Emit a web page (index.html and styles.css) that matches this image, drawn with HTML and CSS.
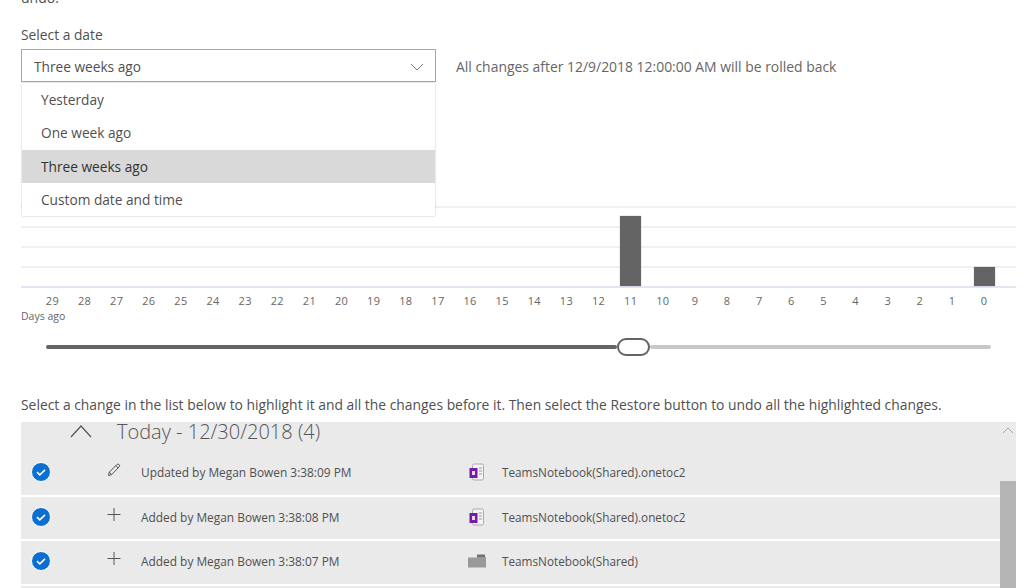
FILE: index.html
```html
<!DOCTYPE html>
<html lang="en">
<head>
<meta charset="utf-8">
<title>Restore</title>
<link rel="stylesheet" href="styles.css">
</head>
<body>
<main class="page">
  <p class="cut">undo.</p>
  <label class="field-label">Select a date</label>
  <div class="select-row">
    <div class="select-wrap">
      <div class="select-box">
        <span>Three weeks ago</span>
        <svg class="caret" width="14" height="8" viewBox="0 0 14 8"><path d="M1 1l6 6 6-6" fill="none" stroke="#777" stroke-width="1"/></svg>
      </div>
      <ul class="menu">
        <li>Yesterday</li>
        <li>One week ago</li>
        <li class="selected">Three weeks ago</li>
        <li>Custom date and time</li>
      </ul>
    </div>
    <span class="hint">All changes after 12/9/2018 12:00:00 AM will be rolled back</span>
  </div>

  <section class="chart">
    <div class="plot">
      <i></i><i></i><i></i><i></i><i></i><i></i><i></i><i></i><i></i><i></i>
      <i></i><i></i><i></i><i></i><i></i><i></i><i></i><i></i>
      <i class="bar tall"></i>
      <i></i><i></i><i></i><i></i><i></i><i></i><i></i><i></i><i></i><i></i>
      <i class="bar short"></i>
    </div>
    <div class="ticks">
      <span>29</span><span>28</span><span>27</span><span>26</span><span>25</span><span>24</span><span>23</span><span>22</span><span>21</span><span>20</span>
      <span>19</span><span>18</span><span>17</span><span>16</span><span>15</span><span>14</span><span>13</span><span>12</span><span>11</span><span>10</span>
      <span>9</span><span>8</span><span>7</span><span>6</span><span>5</span><span>4</span><span>3</span><span>2</span><span>1</span><span>0</span>
    </div>
    <div class="axis-title">Days ago</div>
  </section>

  <div class="slider">
    <div class="slider-fill"></div>
    <div class="slider-thumb"></div>
    <div class="slider-rest"></div>
  </div>

  <p class="instructions">Select a change in the list below to highlight it and all the changes before it. Then select the Restore button to undo all the highlighted changes.</p>

  <section class="list">
    <div class="list-body">
      <div class="group-head">
        <svg class="group-chevron" width="22" height="14" viewBox="0 0 22 14"><path d="M1 13L11 2l10 11" fill="none" stroke="#555" stroke-width="1.200"/></svg>
        <span>Today - 12/30/2018 (4)</span>
      </div>
      <div class="row">
        <svg class="check" width="20" height="20" viewBox="0 0 20 20"><circle cx="10" cy="10" r="9.500" fill="#0a6fd0" stroke="#fff"/><path d="M6 10.200l2.800 2.600L14 7.800" fill="none" stroke="#fff" stroke-width="1.600"/></svg>
        <svg class="action" width="14" height="14" viewBox="0 0 14 14"><path d="M1.500 12.500l.8-3.400L9.800 1.600a1.600 1.600 0 0 1 2.300 2.300L4.700 11.600zM2.300 9.100l2.400 2.500M8.800 2.600l2.400 2.400" fill="none" stroke="#555" stroke-width="1"/></svg>
        <span class="who">Updated by Megan Bowen 3:38:09 PM</span>
        <svg class="file" width="16" height="18" viewBox="0 0 16 18"><rect x="3.500" y="1" width="11" height="16" rx="1.500" fill="#f4f4f4" stroke="#aaa"/><path d="M10 5h3M10 8h3M10 11h3" stroke="#999"/><rect x="0.500" y="5" width="8" height="10" fill="#7719aa"/><rect x="3" y="8" width="3" height="4" fill="#e8d8f0"/></svg>
        <span class="name">TeamsNotebook(Shared).onetoc2</span>
      </div>
      <div class="row">
        <svg class="check" width="20" height="20" viewBox="0 0 20 20"><circle cx="10" cy="10" r="9.500" fill="#0a6fd0" stroke="#fff"/><path d="M6 10.200l2.800 2.600L14 7.800" fill="none" stroke="#fff" stroke-width="1.600"/></svg>
        <svg class="action" width="14" height="14" viewBox="0 0 14 14"><path d="M7 0v13M.5 6.500h13" fill="none" stroke="#555" stroke-width="1"/></svg>
        <span class="who">Added by Megan Bowen 3:38:08 PM</span>
        <svg class="file" width="16" height="18" viewBox="0 0 16 18"><rect x="3.500" y="1" width="11" height="16" rx="1.500" fill="#f4f4f4" stroke="#aaa"/><path d="M10 5h3M10 8h3M10 11h3" stroke="#999"/><rect x="0.500" y="5" width="8" height="10" fill="#7719aa"/><rect x="3" y="8" width="3" height="4" fill="#e8d8f0"/></svg>
        <span class="name">TeamsNotebook(Shared).onetoc2</span>
      </div>
      <div class="row">
        <svg class="check" width="20" height="20" viewBox="0 0 20 20"><circle cx="10" cy="10" r="9.500" fill="#0a6fd0" stroke="#fff"/><path d="M6 10.200l2.800 2.600L14 7.800" fill="none" stroke="#fff" stroke-width="1.600"/></svg>
        <svg class="action" width="14" height="14" viewBox="0 0 14 14"><path d="M7 0v13M.5 6.500h13" fill="none" stroke="#555" stroke-width="1"/></svg>
        <span class="who">Added by Megan Bowen 3:38:07 PM</span>
        <svg class="file" width="18" height="14" viewBox="0 0 18 14"><path d="M9 .5h8V4H9z" fill="#707070"/><path d="M0 3.500h9l1-.5h8v10.500H0z" fill="#999"/></svg>
        <span class="name">TeamsNotebook(Shared)</span>
      </div>
    </div>
    <div class="scrollbar">
      <svg class="scroll-up" width="12" height="7" viewBox="0 0 12 7"><path d="M1 6l5-5 5 5" fill="none" stroke="#aaa"/></svg>
      <div class="scroll-thumb"></div>
    </div>
  </section>
</main>
</body>
</html>
```
FILE: styles.css
```css
* { box-sizing: border-box; }
html, body { margin: 0; height: 588px; overflow: hidden; background: #fff; }
body { font-family: "Open Sans", "Liberation Sans", sans-serif; color: #505050; }
.page { padding: 0 8px 0 21px; height: 588px; overflow: hidden; }
.cut { margin: -12px 0 0; height: 19px; font-size: 14px; line-height: 19px; }
.field-label { display: block; margin-top: 18px; height: 20px; font-size: 13.800px; line-height: 20px; }
.select-row { display: flex; align-items: center; gap: 20px; margin-top: 4px; }
.select-wrap { position: relative; width: 415px; }
.select-box { display: flex; align-items: center; justify-content: space-between; height: 33px; padding: 2px 11px 0 12px; border: 1px solid #a6a6a6; font-size: 13.700px; }
.menu { position: absolute; z-index: 2; top: 34px; left: 1px; right: 1px; margin: 0; padding: 0; list-style: none; background: #fff; box-shadow: 0 0 2px rgba(0,0,0,.25); font-size: 13.700px; }
.menu li { height: 33.300px; line-height: 33px; padding-left: 19px; }
.menu .selected { background: #d9d9d9; color: #333; }
.hint { padding-top: 1px; font-size: 13.930px; color: #666; }
.chart { margin-top: 124px; }
.plot { display: grid; grid-template-columns: repeat(30, 32.130px); align-items: end; height: 82px; padding-left: 15.400px; border-bottom: 2px solid #e2e4f3; background: repeating-linear-gradient(to bottom, #f0f0f0 0 2px, transparent 2px 20px); }
.bar { display: block; width: 21px; margin-left: 5.500px; background: #646464; box-shadow: 0 0 1px #999; }
.tall { height: 70px; }
.short { height: 19px; }
.ticks { display: grid; grid-template-columns: repeat(30, 32.130px); padding-left: 15.400px; margin-top: 5px; font-size: 11px; line-height: 16px; text-align: center; color: #666; letter-spacing: .3px; }
.axis-title { font-size: 10.500px; line-height: 14px; color: #666; }
.slider { display: flex; align-items: center; width: 945px; height: 18px; margin: 15px 0 0 25px; }
.slider-fill { width: 571px; height: 4px; background: #646464; border-radius: 2px; }
.slider-thumb { flex: none; width: 33px; height: 18px; background: #fff; border: 2px solid #646464; border-radius: 9px; }
.slider-rest { flex: 1; height: 4px; background: #c8c8c8; border-radius: 2px; }
.instructions { margin: 39px 0 0; height: 20px; font-size: 13.880px; line-height: 20px; white-space: nowrap; }
.list { display: flex; height: 166px; margin-top: 7px; background: #eaeaea; }
.list-body { flex: 1; }
.group-head { display: flex; align-items: flex-start; gap: 25px; height: 30px; padding: 0 0 0 49px; font-size: 20px; line-height: 20px; font-weight: 300; color: #555; }
.group-chevron { margin-top: 2px; }
.row { display: flex; align-items: center; height: 44.500px; padding: 0 0 2px 10px; border-bottom: 2px solid #fff; font-size: 11.900px; }
.check { flex: none; }
.action { flex: none; margin: -4px 0 0 56px; }
.who { width: 327px; margin-left: 20px; }
.file { flex: none; width: 18px; }
.name { margin-left: 16px; font-size: 11.750px; }
.scrollbar { display: flex; flex-direction: column; align-items: center; width: 16px; }
.scroll-up { flex: none; margin-top: 5px; }
.scroll-thumb { width: 100%; height: 107px; margin-top: 47px; background: #b5b5b5; }
```
